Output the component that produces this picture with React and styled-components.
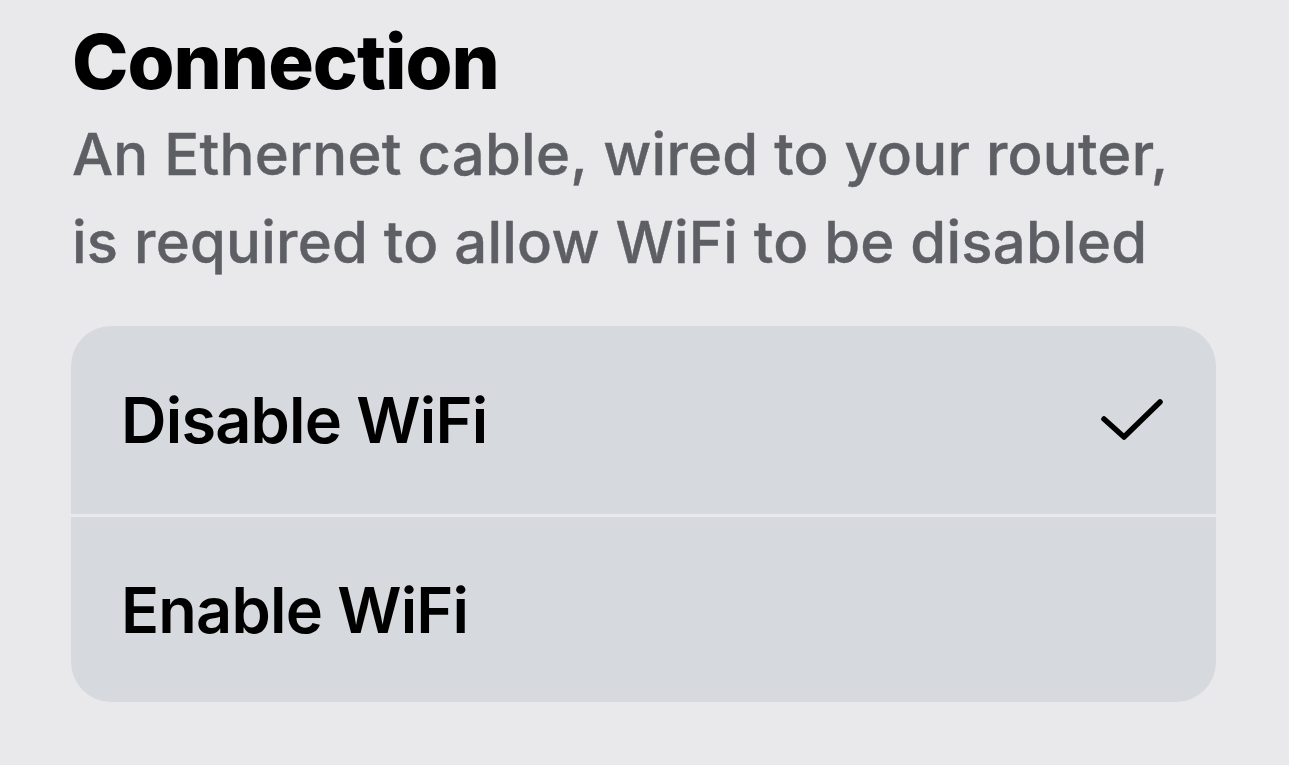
import React from 'react';
import styled, { createGlobalStyle } from 'styled-components';

const GlobalStyle = createGlobalStyle`
  html, body {
    margin: 0;
    padding: 0;
    background: #e9e9eb;
    font-family: Inter, "Noto Sans", "Liberation Sans", sans-serif;
    -webkit-font-smoothing: antialiased;
  }
`;

const Page = styled.div`
  width: 1289px;
  height: 765px;
  box-sizing: border-box;
  padding: 15px 73px 0 71px;
  overflow: hidden;
`;

const Title = styled.h1`
  margin: 0 0 0 1px;
  font-size: 76px;
  line-height: 92px;
  font-weight: 800;
  letter-spacing: -1px;
  color: #000;
`;

const Subtitle = styled.p`
  margin: 3px 0 0 1px;
  font-size: 58px;
  line-height: 88px;
  font-weight: 500;
  letter-spacing: 0.25px;
  color: #5d5f64;
  -webkit-text-stroke: 0.4px #5d5f64;
`;

const Card = styled.div`
  margin-top: 40px;
  background: #d6dade;
  border-radius: 40px;
  overflow: hidden;
`;

const Row = styled.div`
  height: ${p => p.$h}px;
  display: flex;
  align-items: center;
  justify-content: space-between;
  padding: 0 52px 0 50px;
  border-top: ${p => (p.$divider ? '3px solid #e7e9ec' : 'none')};
  box-sizing: border-box;
`;

const Label = styled.span`
  font-size: 63px;
  font-weight: 600;
  letter-spacing: -0.8px;
  color: #000;
`;

const Check = () => (
  <svg width="64" height="44" viewBox="0 0 64 44" fill="none">
    <path
      d="M4 21 L24 39 L60 4"
      stroke="#000"
      strokeWidth="5.5"
      strokeLinecap="round"
      strokeLinejoin="round"
    />
  </svg>
);

const options = [
  { label: 'Disable WiFi', selected: true },
  { label: 'Enable WiFi', selected: false },
];

export default function App() {
  return (
    <>
      <GlobalStyle />
      <Page>
        <Title>Connection</Title>
        <Subtitle>
          An Ethernet cable, wired to your router,
          <br />
          is required to allow WiFi to be disabled
        </Subtitle>
        <Card>
          {options.map((o, i) => (
            <Row key={o.label} $divider={i > 0} $h={188}>
              <Label>{o.label}</Label>
              {o.selected && <Check />}
            </Row>
          ))}
        </Card>
      </Page>
    </>
  );
}
